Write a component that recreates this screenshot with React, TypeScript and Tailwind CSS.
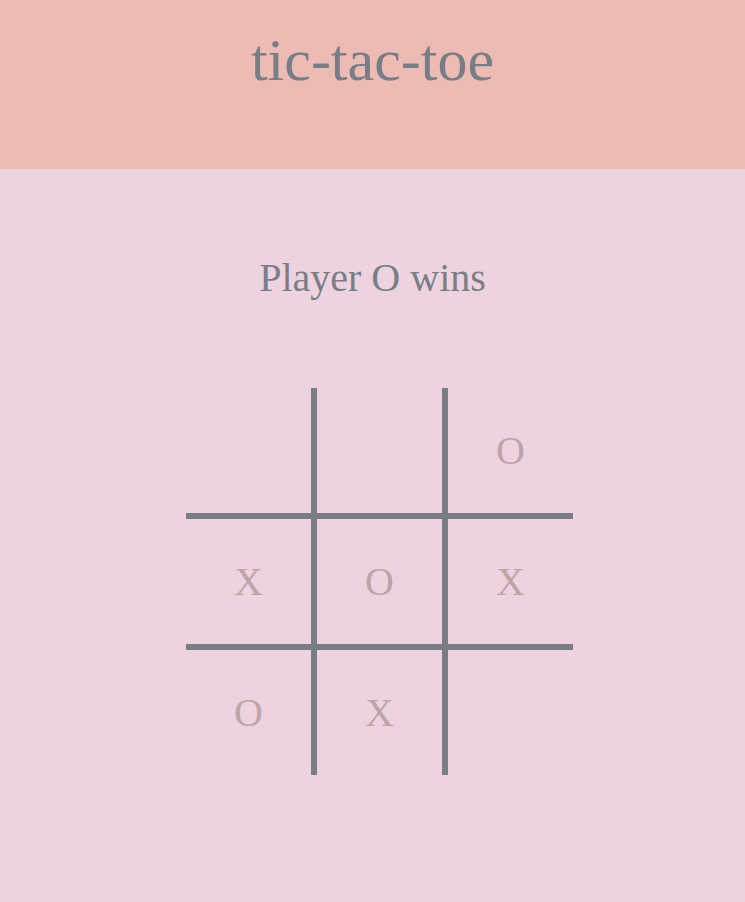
import React from "react";

const board: string[] = ["", "", "O", "X", "O", "X", "O", "X", ""];

export default function App() {
  const serif = { fontFamily: '"Liberation Serif", "Times New Roman", serif' };
  return (
    <div className="min-h-[902px] bg-[#edd3df]" style={serif}>
      <header className="h-[169px] bg-[#ecbbb4] pt-[30px] text-center">
        <h1 className="text-[60px] leading-[60px] font-normal text-[#7b7d86]">tic-tac-toe</h1>
      </header>
      <div className="pt-[89px] text-center">
        <p className="text-[40px] leading-[40px] text-[#7b7d86]">Player O wins</p>
      </div>
      <div className="mt-[90px] flex justify-center pl-[14px]">
        <div className="grid grid-cols-[125px_125px_125px] grid-rows-[125px_125px_125px] gap-[6px] bg-[#7b7d86]">
          {board.map((v, i) => (
            <div
              key={i}
              className="flex items-center justify-center bg-[#edd3df] text-[40px] text-[#bfa3a9]"
            >
              {v}
            </div>
          ))}
        </div>
      </div>
    </div>
  );
}
